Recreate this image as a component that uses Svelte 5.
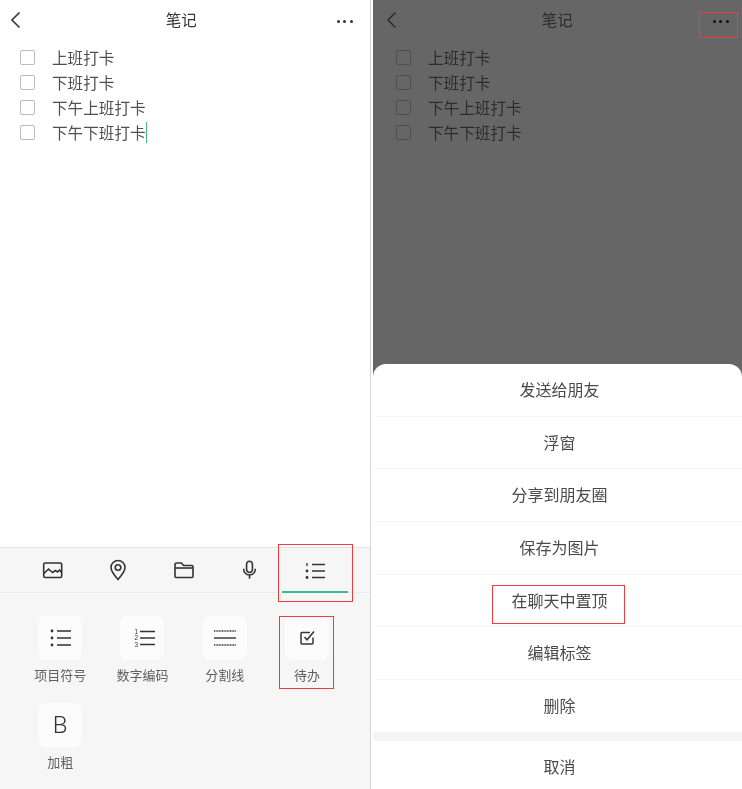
<script>
	const todos = ['上班打卡', '下班打卡', '下午上班打卡', '下午下班打卡'];
	const menu = ['发送给朋友', '浮窗', '分享到朋友圈', '保存为图片', '在聊天中置顶', '编辑标签', '删除'];
</script>

{#snippet note(caret)}
	<header class="top">
		<svg class="back" width="12" height="18" viewBox="0 0 12 18"><path d="M10.5 1.500 3 9l7.500 7.500" fill="none" stroke="currentColor" stroke-width="1.6" /></svg>
		<span class="title">笔记</span>
		<span class="dots"><i></i><i></i><i></i></span>
	</header>
	<ul class="todos">
		{#each todos as t, i}
			<li>
				<span class="box"></span>
				<span class="txt">{t}</span>
				{#if caret && i === todos.length - 1}<span class="caret"></span>{/if}
			</li>
		{/each}
	</ul>
{/snippet}

<div class="page">
	<section class="phone left">
		<div class="body">{@render note(true)}</div>
		<div class="tools">
			<div class="toolbar">
				<span class="tool">
					<svg width="22" height="18" viewBox="0 0 22 18" fill="none" stroke="#333" stroke-width="1.6"><rect x="1.700" y="2" width="18" height="14.500" rx="1.500" /><path d="M2 12.500 6.500 8l4 3.500 3-2 2 1.500 2-2 2 2.500" /></svg>
				</span>
				<span class="tool">
					<svg width="18" height="22" viewBox="0 0 18 22" fill="none" stroke="#333" stroke-width="1.6"><path d="M9 20.500C5 16 2 12.500 2 8.500a7 7 0 0 1 14 0c0 4-3 7.500-7 12Z" /><circle cx="9" cy="8.500" r="2.800" /></svg>
				</span>
				<span class="tool">
					<svg width="22" height="18" viewBox="0 0 22 18" fill="none" stroke="#333" stroke-width="1.6"><path d="M2 3.500A1.500 1.500 0 0 1 3.500 2h5l2 2.500h8A1.500 1.500 0 0 1 20 6v9.500a1 1 0 0 1-1 1H3a1 1 0 0 1-1-1Z" /><path d="M2 7h18" /></svg>
				</span>
				<span class="tool">
					<svg width="15" height="20" viewBox="0 0 18 24" fill="none" stroke="#333" stroke-width="1.9"><rect x="5.500" y="1.500" width="7" height="13.500" rx="3.500" /><path d="M2 10.500c0 4.500 3 7.500 7 7.500s7-3 7-7.500M9 18v4.500" /></svg>
				</span>
				<span class="tool active">
					<svg width="22" height="18" viewBox="0 0 22 18" fill="none" stroke="#333" stroke-width="1.500"><path d="M7 2.500h13M7 9h13M7 15.500h13" /><path d="M2 1v3" stroke-width="1.300" /><circle cx="2" cy="9" r="1.400" fill="#333" stroke="none" /><circle cx="2" cy="15.500" r="1.400" fill="#333" stroke="none" /></svg>
				</span>
			</div>
			<div class="grid">
				<div class="item">
					<span class="tile">
						<svg width="22" height="18" viewBox="0 0 22 18" fill="none" stroke="#333" stroke-width="1.400"><path d="M8 2h14M8 9h14M8 16h14" /><circle cx="3" cy="2" r="1.400" fill="#333" stroke="none" /><circle cx="3" cy="9" r="1.400" fill="#333" stroke="none" /><circle cx="3" cy="16" r="1.400" fill="#333" stroke="none" /></svg>
					</span>
					<span class="label">项目符号</span>
				</div>
				<div class="item">
					<span class="tile">
						<svg width="26" height="18" viewBox="0 0 26 18" fill="none" stroke="#333" stroke-width="1.400"><path d="M11 2.500h15M11 9h15M11 15.500h15" /><text x="5.500" y="4.800" class="digit">1</text><text x="5.500" y="11.300" class="digit">2</text><text x="5.500" y="17.800" class="digit">3</text></svg>
					</span>
					<span class="label">数字编码</span>
				</div>
				<div class="item">
					<span class="tile">
						<svg width="22" height="16" viewBox="0 0 22 16" fill="none" stroke="#333"><path d="M0 1h22M0 15h22" stroke-width="1.300" stroke-dasharray="1 .6" /><path d="M0 8h22" stroke-width="1.400" /></svg>
					</span>
					<span class="label">分割线</span>
				</div>
				<div class="item">
					<span class="tile">
						<svg width="16" height="16" viewBox="0 0 16 16" fill="none" stroke="#333" stroke-width="1.500"><path d="M14 7.500v5.500a1 1 0 0 1-1 1H3a1 1 0 0 1-1-1V3.500a1 1 0 0 1 1-1h8" /><path d="M5.500 7 8 9.800 15 1.500" /></svg>
					</span>
					<span class="label">待办</span>
				</div>
				<div class="item">
					<span class="tile bold">B</span>
					<span class="label">加粗</span>
				</div>
			</div>
		</div>
		<span class="mark m1"></span>
		<span class="mark m2"></span>
	</section>

	<section class="phone right">
		<div class="body dim">{@render note(false)}</div>
		<div class="sheet">
			{#each menu as m}
				<div class="row">{m}</div>
			{/each}
			<div class="cancel">取消</div>
		</div>
		<span class="mark m3"></span>
		<span class="mark m4"></span>
	</section>
</div>

<style>
	:global(body) {
		margin: 0;
		background: #fff;
	}
	.page {
		display: flex;
		width: 742px;
		height: 789px;
		overflow: hidden;
		font-family: 'Noto Sans CJK SC', 'Liberation Sans', sans-serif;
	}
	.phone {
		position: relative;
		display: flex;
		flex-direction: column;
		height: 789px;
		overflow: hidden;
	}
	.left {
		width: 370px;
		border-right: 1px solid #d6d6d6;
	}
	.right {
		width: 369px;
		margin-left: 2px;
		background: #666;
	}
	.body {
		flex: 1;
		color: #505050;
		filter: blur(0.35px);
	}
	.top {
		display: flex;
		align-items: center;
		justify-content: space-between;
		height: 40px;
		padding: 0 17px 0 8.500px;
		color: #333;
	}
	.back {
		display: block;
	}
	.title {
		font-size: 15.500px;
		margin: 0 0 2px 5px;
	}
	.dots {
		display: flex;
		gap: 3.500px;
		margin-top: 2px;
	}
	.dots i {
		width: 3px;
		height: 3px;
		border-radius: 50%;
		background: #333;
	}
	.todos {
		list-style: none;
		margin: 4.500px 0 0;
		padding: 0 0 0 19.500px;
	}
	.todos li {
		display: flex;
		align-items: center;
		height: 25px;
	}
	.box {
		width: 15px;
		height: 15px;
		box-sizing: border-box;
		border: 1.500px solid #bbb;
		border-radius: 2px;
		margin-right: 17.500px;
		flex: none;
	}
	.txt {
		font-size: 15.600px;
		line-height: 25px;
	}
	.caret {
		width: 1.500px;
		height: 21px;
		background: #3dbb80;
	}
	.dim {
		flex: none;
		width: 370px;
		margin-left: 3px;
		color: #2c2c2c;
	}
	.dim .top {
		color: #2c2c2c;
	}
	.dim .dots i {
		background: #111;
	}
	.dim .box {
		border-color: #4f4f4f;
	}
	.tools {
		height: 242px;
		background: #f6f6f6;
		border-top: 1px solid #e6e6e6;
		box-sizing: border-box;
		filter: blur(0.35px);
	}
	.toolbar {
		display: flex;
		height: 45px;
		box-sizing: border-box;
		border-bottom: 1px solid #ececec;
		padding-left: 20px;
	}
	.tool {
		display: flex;
		align-items: center;
		justify-content: center;
		width: 65.500px;
		box-sizing: border-box;
	}
	.tool.active {
		width: 66px;
		border-bottom: 2px solid #3dbb80;
		padding: 2px 0 0 1px;
		margin-bottom: -1px;
	}
	.grid {
		display: grid;
		grid-template-columns: repeat(4, 82.300px);
		row-gap: 18px;
		padding: 23px 0 0 19px;
	}
	.item {
		display: flex;
		flex-direction: column;
		align-items: center;
		gap: 5px;
	}
	.tile {
		display: flex;
		align-items: center;
		justify-content: center;
		width: 44px;
		height: 44px;
		background: #fcfcfc;
		border-radius: 8px;
	}
	.digit {
		font-family: 'Liberation Sans', sans-serif;
		font-size: 6.500px;
		fill: #333;
		stroke: none;
	}
	.bold {
		font-family: Roboto, 'Liberation Sans', sans-serif;
		font-weight: 300;
		font-size: 24px;
		color: #333;
	}
	.label {
		font-size: 13px;
		line-height: 20px;
		color: #5e5e5e;
		white-space: nowrap;
	}
	.sheet {
		position: absolute;
		left: 0;
		right: 0;
		top: 364px;
		bottom: 0;
		background: #fff;
		border-radius: 13px 13px 0 0;
		color: #4a4a4a;
		font-size: 16px;
		filter: blur(0.35px);
	}
	.row {
		display: flex;
		align-items: center;
		justify-content: center;
		height: 52.700px;
		box-sizing: border-box;
		padding: 0 0 2px 4px;
		border-bottom: 1px solid #f5f5f5;
	}
	.row:nth-last-child(2) {
		border-bottom: 9px solid #f5f5f5;
		height: 61px;
	}
	.cancel {
		display: flex;
		align-items: center;
		justify-content: center;
		height: 48px;
		box-sizing: border-box;
		padding: 1px 0 0 4px;
	}
	.mark {
		position: absolute;
		border: 1px solid #f03c3c;
		box-sizing: border-box;
	}
	.m1 {
		left: 278px;
		top: 544px;
		width: 75px;
		height: 58px;
	}
	.m2 {
		left: 279px;
		top: 616px;
		width: 55px;
		height: 73px;
	}
	.m3 {
		left: 326px;
		top: 12px;
		width: 39px;
		height: 26px;
	}
	.m4 {
		left: 119px;
		top: 585px;
		width: 133px;
		height: 39px;
	}
</style>
